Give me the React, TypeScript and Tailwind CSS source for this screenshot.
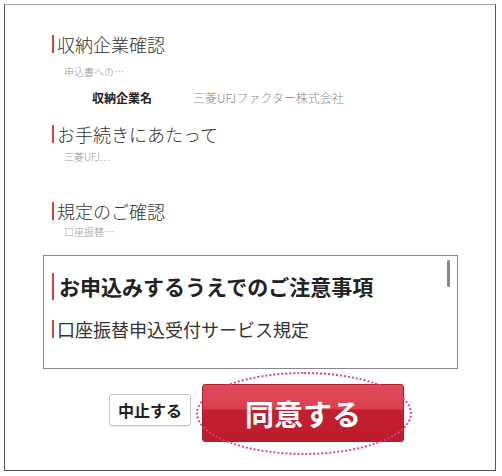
const jp = "font-['Noto_Sans_CJK_JP','Noto_Sans',sans-serif]";

function Heading({ children }: { children: React.ReactNode }) {
  return (
    <h2 className="border-l-2 border-[#d6404b] pl-[3px] text-[18px] leading-[18px] font-light text-[#333]">
      {children}
    </h2>
  );
}

function Note({ children, className = "" }: { children: React.ReactNode; className?: string }) {
  return <p className={`ml-[12px] text-[10px] leading-[10px] text-[#999] font-light ${className}`}>{children}</p>;
}

export default function App() {
  return (
    <div className={`w-[502px] h-[476px] bg-white pt-1 pl-1 ${jp}`}>
      <div className="w-[492px] h-[467px] border border-[#555] border-t-[#aaa] flex flex-col">
        <div className="pl-[47px] pt-[30px]">
          <Heading>収納企業確認</Heading>
          <Note className="mt-[14px]">申込書への…</Note>
          <div className="mt-[13px] flex items-center h-[16px] text-[12px] leading-[16px]">
            <span className="ml-[40px] w-[101px] font-bold text-[#222]">収納企業名</span>
            <span className="font-light text-[#888]">三菱UFJファクター株式会社</span>
          </div>
          <div className="mt-[19px]">
            <Heading>お手続きにあたって</Heading>
          </div>
          <Note className="mt-[9px]">三菱UFJ…</Note>
          <div className="mt-[40px]">
            <Heading>規定のご確認</Heading>
          </div>
          <Note className="mt-[7px]">口座振替…</Note>
        </div>

        <div className="relative mt-[18px] ml-[38px] w-[415px] h-[114px] border border-[#888] pl-[8px] pt-[17px]">
          <h3 className="border-l-2 border-[#d6404b] pl-[5px] text-[21px] leading-[27px] font-bold text-[#222]">
            お申込みするうえでのご注意事項
          </h3>
          <h3 className="mt-[20px] border-l-2 border-[#d6404b] pl-[3px] text-[18px] leading-[18px] font-normal text-[#333]">
            口座振替申込受付サービス規定
          </h3>
          <div className="absolute right-[7px] top-[4px] w-[3px] h-[27px] rounded-sm bg-[#888]" />
        </div>

        <div className="mt-[15px] ml-[104px] flex items-start">
          <button
            type="button"
            className="mt-[10px] w-[82px] h-[32px] border border-[#c4c4c4] rounded-[3px] bg-white text-[16px] font-bold text-[#222] shadow-[0_1px_1px_rgba(0,0,0,0.08)]"
          >
            中止する
          </button>
          <div className="relative ml-[11px]">
            <button
              type="button"
              className="w-[202px] h-[58px] rounded-[3px] border border-[#b01c29] bg-[linear-gradient(to_bottom,#e04b58_0%,#da414f_42%,#c21f30_45%,#bd1c2c_100%)] text-[29px] leading-none font-bold text-white"
            >
              同意する
            </button>
            <div className="absolute left-[-6px] top-[-12px] w-[216px] h-[83px] rounded-[50%] border-2 border-dotted border-[#e8388e] pointer-events-none" />
          </div>
        </div>
      </div>
    </div>
  );
}
